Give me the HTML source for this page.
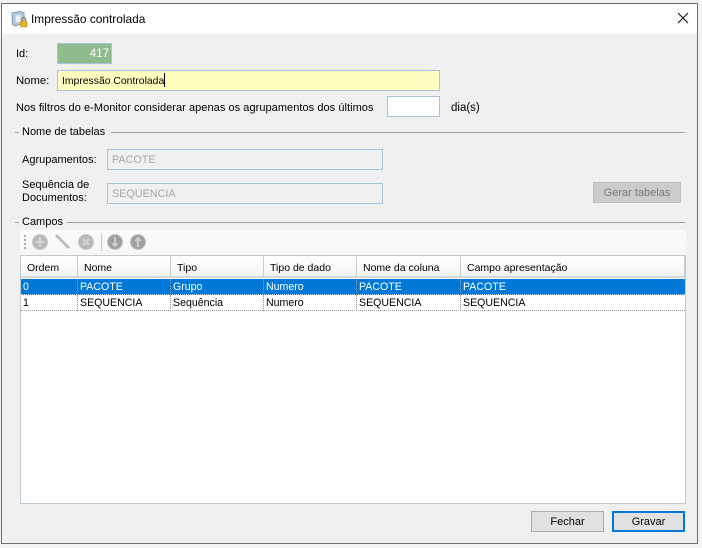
<!DOCTYPE html>
<html><head><meta charset="utf-8">
<style>
html,body{margin:0;padding:0;background:#f3f3f3}
body{width:702px;height:548px;position:relative;overflow:hidden;font-family:"Liberation Sans",sans-serif;font-size:11px;color:#000}
.a{position:absolute;white-space:nowrap;line-height:14px}
.box{position:absolute;box-sizing:border-box;border:1px solid #a9c0de;line-height:21px;white-space:nowrap;overflow:hidden}
.ln{position:absolute;height:1px;background:#a0a0a0}
.btn{position:absolute;box-sizing:border-box;text-align:center;background:#e1e1e1;border:1px solid #adadad;line-height:21px}
.h{position:absolute;top:256px;height:22px;box-sizing:border-box;background:linear-gradient(#ffffff,#f4f4f4);border-right:1px solid #c4cfd8;border-bottom:2px solid #d5d9dc;line-height:24px;padding-left:6px;white-space:nowrap;font-size:10.5px}
.c{position:absolute;height:16px;line-height:17px;white-space:nowrap;box-sizing:border-box;padding-left:2px;border-right:1px dotted #9a9a9a;font-size:10.6px}
</style></head><body>
<div style="position:absolute;left:1px;top:3px;width:697px;height:541px;box-sizing:border-box;border:1px solid #6e6e6e;background:#f0f0f0"></div>
<div style="position:absolute;left:2px;top:4px;width:695px;height:30px;background:#fff"></div>

<svg style="position:absolute;left:10px;top:10px" width="18" height="18" viewBox="0 0 18 18">
<path d="M2 3 L10 1.5 L14 3 L14 13 L5 16 L2.5 14 Z" fill="#b9cfe2" stroke="#7f93a6" stroke-width="1"/>
<path d="M5 5 L11 4 L11 12 L5 13.5 Z" fill="#e8f1f8" stroke="#a0b2c2" stroke-width=".7"/>
<rect x="10.5" y="11" width="6.5" height="6" rx="1" fill="#e6b422" stroke="#b88c10" stroke-width=".6"/>
<path d="M12 11 V9.3 a1.8 1.8 0 0 1 3.6 0 V11" fill="none" stroke="#8a7a50" stroke-width="1"/>
</svg>
<div class="a" style="left:31px;top:12px;font-size:11.9px">Impressão controlada</div>
<svg style="position:absolute;left:677px;top:12px" width="12" height="12" viewBox="0 0 12 12"><path d="M1 1 L11 11 M11 1 L1 11" stroke="#111" stroke-width="1.1" fill="none"/></svg>

<div class="a" style="left:16px;top:47px">Id:</div>
<div class="box" style="left:57px;top:43px;width:55px;height:21px;background:#8fbc8f;color:#fff;text-align:right;padding-right:2px;font-size:11.5px">417</div>
<div class="a" style="left:16px;top:74px;font-size:11.3px">Nome:</div>
<div class="box" style="left:57px;top:70px;width:383px;height:21px;background:#ffffc0;padding-left:4px;font-size:10.4px">Impressão Controlada<span style="display:inline-block;width:1px;height:14px;background:#000;vertical-align:-3px"></span></div>
<div class="a" style="left:16px;top:101px;letter-spacing:.05px">Nos filtros do e-Monitor considerar apenas os agrupamentos dos últimos</div>
<div class="box" style="left:387px;top:96px;width:53px;height:21px;background:#fff"></div>
<div class="a" style="left:451px;top:101px;font-size:11.5px">dia(s)</div>

<div class="ln" style="left:15px;top:132px;width:4px"></div>
<div class="a" style="left:22px;top:125px">Nome de tabelas</div>
<div class="ln" style="left:111px;top:132px;width:574px"></div>
<div class="a" style="left:22px;top:153px">Agrupamentos:</div>
<div class="box" style="left:107px;top:149px;width:276px;height:21px;background:#f0f0f0;color:#a8a8a8;padding-left:4px;line-height:21px;font-size:10.8px">PACOTE</div>
<div class="a" style="left:22px;top:179px;line-height:13px">Sequência de<br>Documentos:</div>
<div class="box" style="left:107px;top:183px;width:276px;height:21px;background:#f0f0f0;color:#a8a8a8;padding-left:4px;line-height:21px;font-size:10.8px">SEQUENCIA</div>
<div class="btn" style="left:593px;top:182px;width:88px;height:21px;background:#cccccc;border-color:#bfbfbf;color:#7a7a7a">Gerar tabelas</div>

<div class="ln" style="left:15px;top:222px;width:4px"></div>
<div class="a" style="left:22px;top:215px">Campos</div>
<div class="ln" style="left:67px;top:222px;width:618px"></div>

<div style="position:absolute;left:20px;top:230px;width:666px;height:25px;background:linear-gradient(#fbfbfb,#f6f6f6);border-radius:3px 3px 0 0"></div>
<svg style="position:absolute;left:20px;top:230px" width="130" height="25" viewBox="0 0 130 25">
<g fill="#a9a9a9"><rect x="4" y="5" width="2" height="2"/><rect x="4" y="9" width="2" height="2"/><rect x="4" y="13" width="2" height="2"/><rect x="4" y="17" width="2" height="2"/></g>
<circle cx="20" cy="12" r="7.5" fill="#b8b8b8" stroke="#c8c8c8"/><path d="M20 7.5 V16.5 M15.5 12 H24.5" stroke="#d4d4d4" stroke-width="2.6"/>
<path d="M36 5 L49 18" stroke="#bdbdbd" stroke-width="2.8"/>
<circle cx="66" cy="12" r="7.5" fill="#b8b8b8" stroke="#c8c8c8"/><path d="M63 9 L69 15 M69 9 L63 15" stroke="#d0d0d0" stroke-width="2.4"/>
<rect x="81" y="4" width="1" height="17" fill="#c4c4c4"/>
<circle cx="95" cy="12" r="7.5" fill="#a0a0a0" stroke="#c4c4c4"/><path d="M95 7 V16 M92.500 13 L95 16 L97.500 13" stroke="#cfcfcf" stroke-width="2" fill="none"/>
<circle cx="118" cy="12" r="7.5" fill="#a0a0a0" stroke="#c4c4c4"/><path d="M118 17 V8 M115.500 11 L118 8 L120.500 11" stroke="#cfcfcf" stroke-width="2" fill="none"/>
</svg>

<div style="position:absolute;left:20px;top:255px;width:666px;height:249px;box-sizing:border-box;border:1px solid #bfc9d2;background:#fff"></div>
<div class="h" style="left:21px;width:57px">Ordem</div>
<div class="h" style="left:78px;width:93px">Nome</div>
<div class="h" style="left:171px;width:93px">Tipo</div>
<div class="h" style="left:264px;width:93px">Tipo de dado</div>
<div class="h" style="left:357px;width:104px">Nome da coluna</div>
<div class="h" style="left:461px;width:224px">Campo apresentação</div>

<div style="position:absolute;left:21px;top:279px;width:664px;height:16px;background:#0078d7;border-bottom:1px dotted #bcd8f0;box-sizing:border-box"></div>
<div style="position:absolute;left:21px;top:295px;width:664px;height:16px;border-bottom:1px dotted #9a9a9a;box-sizing:border-box"></div>

<div style="color:#fff">
<div class="c" style="left:21px;top:279px;width:57px">0</div>
<div class="c" style="left:78px;top:279px;width:93px">PACOTE</div>
<div class="c" style="left:171px;top:279px;width:93px">Grupo</div>
<div class="c" style="left:264px;top:279px;width:93px">Numero</div>
<div class="c" style="left:357px;top:279px;width:104px">PACOTE</div>
<div class="c" style="left:461px;top:279px;width:224px;border:0">PACOTE</div>
</div>
<div class="c" style="left:21px;top:295px;width:57px">1</div>
<div class="c" style="left:78px;top:295px;width:93px">SEQUENCIA</div>
<div class="c" style="left:171px;top:295px;width:93px">Sequência</div>
<div class="c" style="left:264px;top:295px;width:93px">Numero</div>
<div class="c" style="left:357px;top:295px;width:104px">SEQUENCIA</div>
<div class="c" style="left:461px;top:295px;width:224px;border:0">SEQUENCIA</div>

<div class="btn" style="left:531px;top:511px;width:73px;height:21px">Fechar</div>
<div class="btn" style="left:612px;top:511px;width:73px;height:21px;border:2px solid #0078d7;line-height:19px">Gravar</div>
</body></html>
